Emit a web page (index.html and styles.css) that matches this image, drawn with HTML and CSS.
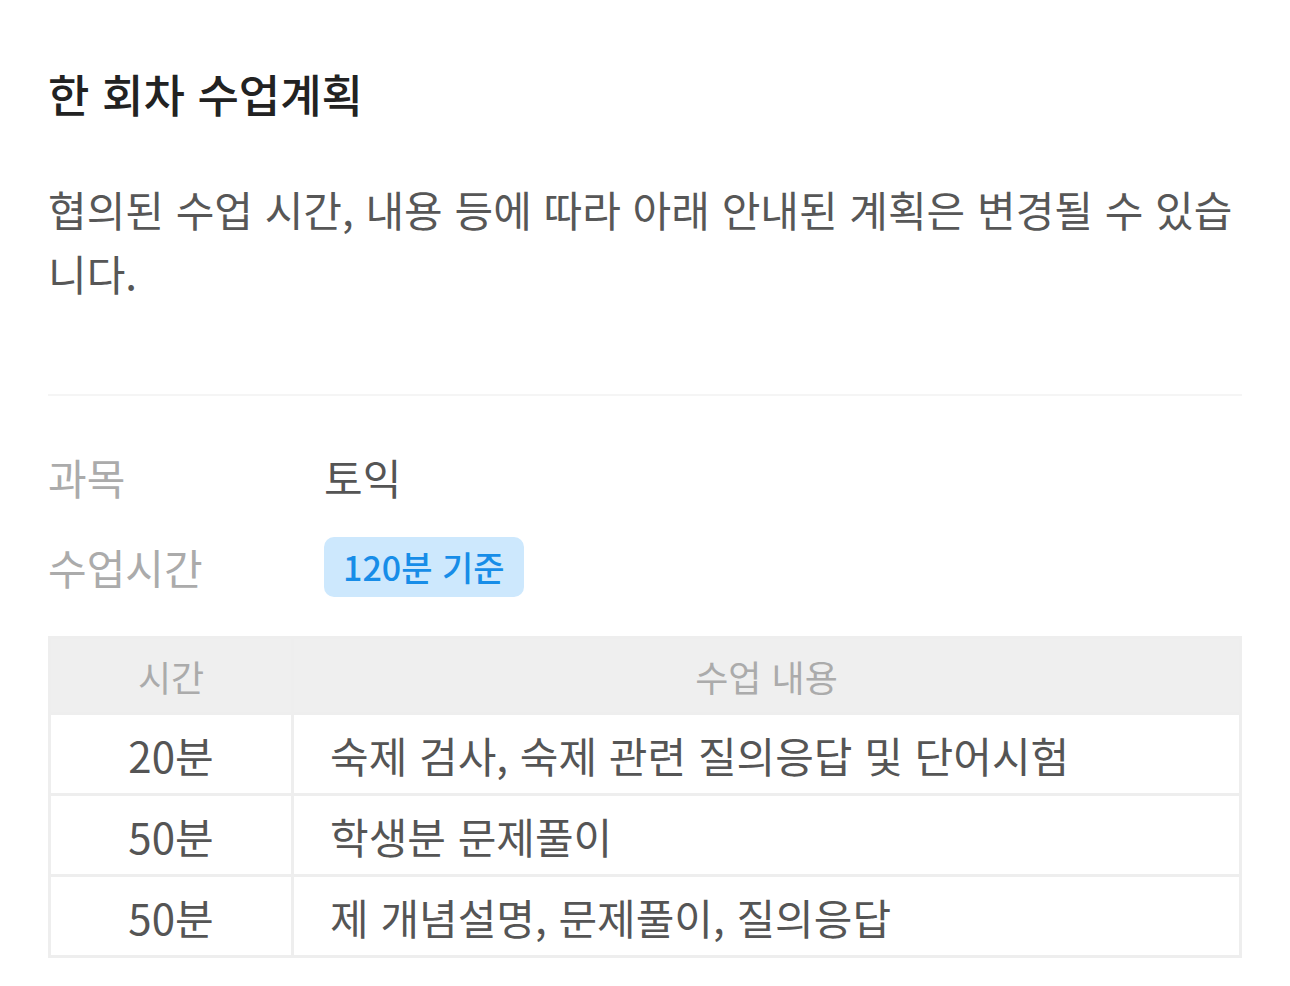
FILE: index.html
```html
<!DOCTYPE html>
<html lang="ko">
<head>
<meta charset="utf-8">
<title>한 회차 수업계획</title>
<link rel="stylesheet" href="styles.css">
</head>
<body>
<main class="plan">
  <h1 class="plan-title">한 회차 수업계획</h1>
  <p class="plan-desc">협의된 수업 시간, 내용 등에 따라 아래 안내된 계획은 변경될 수 있습니다.</p>
  <hr class="divider">
  <dl class="info">
    <div class="info-row">
      <dt class="info-label">과목</dt>
      <dd class="info-value">토익</dd>
    </div>
    <div class="info-row">
      <dt class="info-label">수업시간</dt>
      <dd class="info-value"><span class="badge">120분 기준</span></dd>
    </div>
  </dl>
  <table class="schedule">
    <colgroup>
      <col class="col-time">
      <col class="col-content">
    </colgroup>
    <thead>
      <tr>
        <th class="th">시간</th>
        <th class="th">수업 내용</th>
      </tr>
    </thead>
    <tbody>
      <tr>
        <td class="td td-time">20분</td>
        <td class="td td-content">숙제 검사, 숙제 관련 질의응답 및 단어시험</td>
      </tr>
      <tr>
        <td class="td td-time">50분</td>
        <td class="td td-content">학생분 문제풀이</td>
      </tr>
      <tr>
        <td class="td td-time">50분</td>
        <td class="td td-content">제 개념설명, 문제풀이, 질의응답</td>
      </tr>
    </tbody>
  </table>
</main>
</body>
</html>
```

FILE: styles.css
```css
* {
  box-sizing: border-box;
}

html, body {
  margin: 0;
  padding: 0;
  background: #ffffff;
}

body {
  font-family: "Noto Sans CJK KR", "Noto Sans", sans-serif;
  color: #555555;
}

.plan {
  padding: 60px 48px 0 48px;
  display: flex;
  flex-direction: column;
}

.plan-title {
  margin: 0;
  font-size: 45px;
  line-height: 67px;
  font-weight: 500;
  color: #222222;
}

.plan-desc {
  margin: 50px 0 0 0;
  font-size: 42px;
  line-height: 64px;
  font-weight: 400;
  color: #575757;
}

.divider {
  margin: 89px 0 0 0;
  border: 0;
  height: 2px;
  background: #f5f5f5;
}

.info {
  margin: 51px 0 0 0;
  display: flex;
  flex-direction: column;
  gap: 30px;
}

.info-row {
  display: flex;
  align-items: center;
  height: 60px;
}

.info-label {
  width: 276px;
  flex: none;
  font-size: 42px;
  line-height: 60px;
  color: #ababab;
}

.info-value {
  margin: 0;
  font-size: 42px;
  line-height: 60px;
  color: #555555;
  display: flex;
  align-items: center;
}

.badge {
  display: inline-flex;
  align-items: center;
  height: 60px;
  padding: 0 19px;
  border-radius: 10px;
  background: #cde8fd;
  color: #178de8;
  font-size: 34px;
  font-weight: 500;
}

.schedule {
  margin-top: 39px;
  width: 100%;
  table-layout: fixed;
  border-collapse: separate;
  border-spacing: 3px;
  background: #eeeeee;
}

.col-time {
  width: 240px;
}

.th {
  height: 73px;
  padding: 0;
  background: #efefef;
  color: #ababab;
  font-size: 36px;
  font-weight: 400;
  text-align: center;
  vertical-align: middle;
}

.td {
  height: 78px;
  padding: 0;
  background: #ffffff;
  font-size: 42px;
  color: #555555;
  vertical-align: middle;
}

.td-time {
  text-align: center;
}

.td-content {
  padding-left: 36px;
  text-align: left;
}
```
